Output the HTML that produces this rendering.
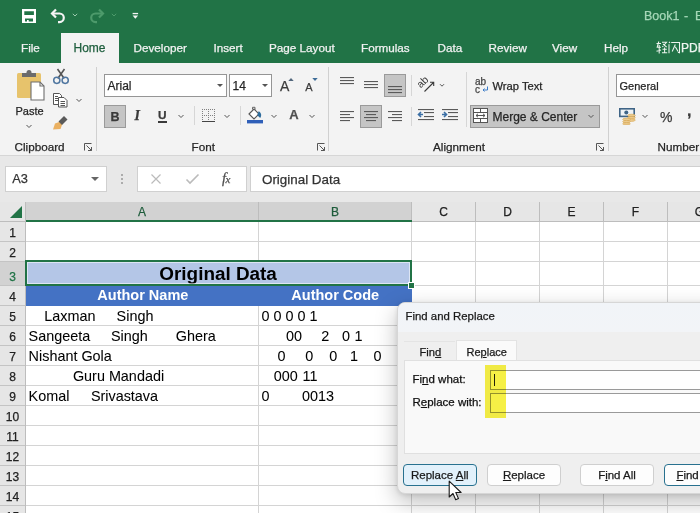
<!DOCTYPE html><html><head><meta charset="utf-8"><style>
html,body{margin:0;padding:0;width:700px;height:513px;overflow:hidden;background:#fff;font-family:"Liberation Sans",sans-serif}
body>div,body>svg{position:absolute}
.t{white-space:pre;line-height:1;-webkit-text-stroke:0.25px currentColor}
</style></head><body>
<div style="left:0px;top:0px;width:700px;height:63px;background:#217346"></div>
<svg style="position:absolute;left:21px;top:8px;" width="16" height="16" viewBox="0 0 16 16"><path fill="#fff" fill-rule="evenodd" d="M1 1h14v14H1z M3.3 3.3h9.6v3.8H3.3z M4 10.6h8v3H7.7v-1.6H6v1.6H4z"/></svg>
<svg style="position:absolute;left:49px;top:7px;" width="18" height="17" viewBox="0 0 18 17"><path d="M3.5 6.5h7a4.3 4.3 0 0 1 0 8.6h-1.5" fill="none" stroke="#f4f4f4" stroke-width="2.2"/><path d="M7 2.5 3 6.5 7 10.5" fill="none" stroke="#f4f4f4" stroke-width="2.2"/></svg>
<svg style="position:absolute;left:71px;top:12px;" width="8" height="6" viewBox="0 0 8 6"><path d="M1.8 1.8 4 4 6.2 1.8" fill="none" stroke="#9cc9ad" stroke-width="1"/></svg>
<svg style="position:absolute;left:88px;top:7px;" width="18" height="17" viewBox="0 0 18 17"><path d="M14.5 6.5h-7a4.3 4.3 0 0 0 0 8.6h1.5" fill="none" stroke="#4d9a6b" stroke-width="2.2"/><path d="M11 2.5 15 6.5 11 10.5" fill="none" stroke="#4d9a6b" stroke-width="2.2"/></svg>
<svg style="position:absolute;left:110px;top:12px;" width="8" height="6" viewBox="0 0 8 6"><path d="M1.8 1.8 4 4 6.2 1.8" fill="none" stroke="#4d9a6b" stroke-width="1"/></svg>
<svg style="position:absolute;left:130px;top:10px;" width="10" height="10" viewBox="0 0 10 10"><rect x="2.6" y="2.9" width="5.5" height="1.3" fill="#f4f4f4"/><path d="M2.6 5.6h5.5L5.35 8.8z" fill="#f4f4f4"/></svg>
<div class="t" style="left:644px;top:10.42px;font-size:12.5px;color:#a6d8b8;font-weight:normal;">Book1</div>
<div class="t" style="left:684px;top:10.42px;font-size:12.5px;color:#a6d8b8;font-weight:normal;">-</div>
<div class="t" style="left:695px;top:10.42px;font-size:12.5px;color:#a6d8b8;font-weight:normal;">E</div>
<div style="left:61px;top:33px;width:58px;height:31px;background:#f3f3f3"></div>
<div class="t" style="left:21px;top:42.10px;font-size:11.7px;color:#f2f2f2;font-weight:normal;">File</div>
<div class="t" style="left:73.5px;top:41.84px;font-size:12px;color:#1f5f3e;font-weight:normal;">Home</div>
<div class="t" style="left:133.5px;top:42.10px;font-size:11.7px;color:#f2f2f2;font-weight:normal;">Developer</div>
<div class="t" style="left:213.5px;top:42.10px;font-size:11.7px;color:#f2f2f2;font-weight:normal;">Insert</div>
<div class="t" style="left:269px;top:42.10px;font-size:11.7px;color:#f2f2f2;font-weight:normal;">Page Layout</div>
<div class="t" style="left:361px;top:42.10px;font-size:11.7px;color:#f2f2f2;font-weight:normal;">Formulas</div>
<div class="t" style="left:437.5px;top:42.10px;font-size:11.7px;color:#f2f2f2;font-weight:normal;">Data</div>
<div class="t" style="left:488.5px;top:42.10px;font-size:11.7px;color:#f2f2f2;font-weight:normal;">Review</div>
<div class="t" style="left:552px;top:42.10px;font-size:11.7px;color:#f2f2f2;font-weight:normal;">View</div>
<div class="t" style="left:604px;top:42.10px;font-size:11.7px;color:#f2f2f2;font-weight:normal;">Help</div>
<svg style="position:absolute;left:656px;top:41px;" width="25" height="13" viewBox="0 0 25 13"><g fill="none" stroke="#eef5ef" stroke-width="1.05"><path d="M0.5 2.5h4.5M2.8 0.5 1.2 6.3h3.8M3.2 4v8.5M0.5 10.3l4.5-1.3M6 1.3h4.5L6.3 6M7 3l3.7 3.2M6.5 8.3h4.3M8.6 6.6v5.2M6 11.8h5.2"/><path d="M13 0.8l1 1.2M13 3.2v9M15.2 1.5h8.3v10.3l-1.6-.5M19.3 3.5 16.2 10.5M19.3 5.8l2.8 4.7"/></g></svg>
<div class="t" style="left:681px;top:41.84px;font-size:12px;color:#eef5ef;font-weight:normal;">PDF</div>
<div style="left:0px;top:63px;width:700px;height:93px;background:#f3f3f3"></div>
<div style="left:0px;top:155px;width:700px;height:1px;background:#d6d6d6"></div>
<div style="left:95.5px;top:67px;width:1px;height:84px;background:#d0d0d0"></div>
<div style="left:327.5px;top:67px;width:1px;height:84px;background:#d0d0d0"></div>
<div style="left:607.5px;top:67px;width:1px;height:84px;background:#d0d0d0"></div>
<div style="left:465.5px;top:72px;width:1px;height:55px;background:#d6d6d6"></div>
<svg style="position:absolute;left:14px;top:69px;" width="34" height="34" viewBox="0 0 34 34"><rect x="3" y="4" width="24" height="25" rx="1.5" fill="#e7c36c"/><path d="M8 4h14v4H8z" fill="#6b6b6b"/><circle cx="15" cy="3.5" r="2.5" fill="#6b6b6b"/><path d="M17 13h9l4 4v14H17z" fill="#fff" stroke="#6e6e6e" stroke-width="1.1"/><path d="M26 13v4h4" fill="none" stroke="#6e6e6e" stroke-width="1.1"/></svg>
<div class="t" style="left:15.5px;top:106.19px;font-size:11px;color:#262626;font-weight:normal;">Paste</div>
<svg style="position:absolute;left:25px;top:123px;" width="8" height="6" viewBox="0 0 8 6"><path d="M1.5 2 4 4.5 6.5 2" fill="none" stroke="#555" stroke-width="1"/></svg>
<svg style="position:absolute;left:52px;top:68px;" width="18" height="17" viewBox="0 0 18 17"><path d="M5.8 10.5 12.5 1M12.2 10.5 5.5 1" stroke="#555" stroke-width="1.6"/><g fill="none" stroke="#4f76a0" stroke-width="1.5"><circle cx="4.8" cy="12.3" r="3.1"/><circle cx="13.2" cy="12.3" r="3.1"/></g></svg>
<svg style="position:absolute;left:52px;top:92px;" width="17" height="16" viewBox="0 0 17 16"><g fill="#fff" stroke="#555" stroke-width="1"><path d="M1.5 1.5h6l2 2v9h-8z"/><path d="M6.5 5.5h5.5l3 3v6.5H6.5z"/></g><g stroke="#555" stroke-width="1"><path d="M3 4.5h3M3 6.5h3M3 8.5h3M8.5 9.5h4.5M8.5 11.5h4.5M8.5 13.5h4.5"/></g></svg>
<svg style="position:absolute;left:75px;top:97px;" width="8" height="6" viewBox="0 0 8 6"><path d="M1.5 2 4 4.5 6.5 2" fill="none" stroke="#555" stroke-width="1"/></svg>
<svg style="position:absolute;left:52px;top:114px;" width="18" height="17" viewBox="0 0 18 17"><path d="M1 15.5 3 9.5 8.5 7.5 10.5 9.5 8.5 15z" fill="#eab061"/><path d="M6.5 7.5 12 2l3.5 3.5L10 11z" fill="#5a5a5a"/></svg>
<div class="t" style="left:14.5px;top:141.10px;font-size:11.7px;color:#262626;font-weight:normal;">Clipboard</div>
<svg style="position:absolute;left:83px;top:142px;" width="10" height="10" viewBox="0 0 10 10"><path d="M1 1h8v8" fill="none" stroke="#666" stroke-width="0"/><path d="M1.5 8.5v-7h7M3.5 3.5l5 5M8.5 5v3.5H5" fill="none" stroke="#555" stroke-width="1"/></svg>
<div style="left:104px;top:74px;width:123px;height:23px;background:#fff;border:1px solid #959595;box-sizing:border-box"></div>
<div class="t" style="left:107.5px;top:79.84px;font-size:12px;color:#262626;font-weight:normal;">Arial</div>
<svg style="position:absolute;left:216px;top:83px;" width="8" height="5" viewBox="0 0 8 5"><path d="M1 1h6L4 4z" fill="#555"/></svg>
<div style="left:229px;top:74px;width:43px;height:23px;background:#fff;border:1px solid #959595;box-sizing:border-box"></div>
<div class="t" style="left:232.5px;top:79.84px;font-size:12px;color:#262626;font-weight:normal;">14</div>
<svg style="position:absolute;left:261px;top:83px;" width="8" height="5" viewBox="0 0 8 5"><path d="M1 1h6L4 4z" fill="#555"/></svg>
<div class="t" style="left:280px;top:79.15px;font-size:14px;color:#3c3c3c;font-weight:normal;">A</div>
<svg style="position:absolute;left:287.5px;top:77px;" width="6" height="5" viewBox="0 0 6 5"><path d="M0.3 4 3 1 5.7 4z" fill="#52677c"/></svg>
<div class="t" style="left:305.3px;top:81.69px;font-size:11px;color:#3c3c3c;font-weight:normal;">A</div>
<svg style="position:absolute;left:311.5px;top:77px;" width="6" height="5" viewBox="0 0 6 5"><path d="M0.3 1 3 4 5.7 1z" fill="#3d6c98"/></svg>
<div style="left:104px;top:105px;width:22px;height:23px;background:#c5c5c5;border:1px solid #9a9a9a;box-sizing:border-box"></div>
<div class="t" style="left:110.5px;top:110.92px;font-size:12.5px;color:#3a3a3a;font-weight:bold;">B</div>
<div class="t" style="left:134.5px;top:108.95px;font-size:14px;color:#3a3a3a;font-weight:bold;font-family:'Liberation Serif',serif"><i>I</i></div>
<div class="t" style="left:158px;top:109.61px;font-size:11.8px;color:#3a3a3a;font-weight:bold;">U</div>
<div style="left:158px;top:121.4px;width:9px;height:1.2px;background:#3a3a3a"></div>
<svg style="position:absolute;left:177px;top:113px;" width="8" height="6" viewBox="0 0 8 6"><path d="M1.5 2 4 4.5 6.5 2" fill="none" stroke="#555" stroke-width="1"/></svg>
<div style="left:193.5px;top:106px;width:1px;height:19px;background:#d6d6d6"></div>
<svg style="position:absolute;left:201px;top:108px;" width="15" height="15" viewBox="0 0 15 15"><g stroke="#808080" stroke-width="1" stroke-dasharray="1 1" fill="none"><path d="M1.5 1v11M7.5 1v11M13.5 1v11M1 1.5h13M1 7.5h13"/></g><path d="M1 13.5h13" stroke="#444" stroke-width="1"/></svg>
<svg style="position:absolute;left:223px;top:113px;" width="8" height="6" viewBox="0 0 8 6"><path d="M1.5 2 4 4.5 6.5 2" fill="none" stroke="#555" stroke-width="1"/></svg>
<div style="left:239.5px;top:106px;width:1px;height:19px;background:#d6d6d6"></div>
<svg style="position:absolute;left:245px;top:106px;" width="19" height="18" viewBox="0 0 19 18"><path d="M4 8 9 3 14 8 9 13z" fill="#fff" stroke="#555" stroke-width="1.1"/><path d="M7.5 3.5V1.3h2.5v2.5" fill="none" stroke="#666" stroke-width="1"/><path d="M13.6 5.3c2.6 1.4 3.4 4.2 1.6 6.6L12.3 9.2z" fill="#2e6c9c"/><rect x="2" y="14" width="16" height="3.4" fill="#2f5fb8"/></svg>
<svg style="position:absolute;left:270px;top:113px;" width="8" height="6" viewBox="0 0 8 6"><path d="M1.5 2 4 4.5 6.5 2" fill="none" stroke="#555" stroke-width="1"/></svg>
<div class="t" style="left:289.3px;top:108.40px;font-size:13px;color:#505050;font-weight:bold;">A</div>
<svg style="position:absolute;left:308px;top:113px;" width="8" height="6" viewBox="0 0 8 6"><path d="M1.5 2 4 4.5 6.5 2" fill="none" stroke="#555" stroke-width="1"/></svg>
<div class="t" style="left:191.5px;top:141.10px;font-size:11.7px;color:#262626;font-weight:normal;">Font</div>
<svg style="position:absolute;left:316px;top:142px;" width="10" height="10" viewBox="0 0 10 10"><path d="M1.5 8.5v-7h7M3.5 3.5l5 5M8.5 5v3.5H5" fill="none" stroke="#555" stroke-width="1"/></svg>
<svg style="position:absolute;left:0px;top:0px;pointer-events:none" width="700" height="155" viewBox="0 0 700 155"><g fill="#5a5a5a"><rect x="340" y="77" width="14" height="1.1"/><rect x="340" y="80" width="14" height="1.1"/><rect x="340" y="83" width="14" height="1.1"/><rect x="364" y="81" width="14" height="1.1"/><rect x="364" y="84" width="14" height="1.1"/><rect x="364" y="87" width="14" height="1.1"/></g></svg>
<div style="left:384px;top:74px;width:22px;height:23px;background:#c5c5c5;border:1px solid #9a9a9a;box-sizing:border-box"></div>
<div style="left:360px;top:105px;width:22px;height:23px;background:#c5c5c5;border:1px solid #9a9a9a;box-sizing:border-box"></div>
<svg style="position:absolute;left:0px;top:0px;pointer-events:none" width="700" height="155" viewBox="0 0 700 155"><g fill="#5a5a5a"><rect x="388" y="86" width="14" height="1.1"/><rect x="388" y="89" width="14" height="1.1"/><rect x="388" y="92" width="14" height="1.1"/><rect x="340" y="111" width="14" height="1.1"/><rect x="340" y="114" width="10" height="1.1"/><rect x="340" y="117" width="14" height="1.1"/><rect x="340" y="120" width="10" height="1.1"/><rect x="364" y="111" width="14" height="1.1"/><rect x="366" y="114" width="10" height="1.1"/><rect x="364" y="117" width="14" height="1.1"/><rect x="366" y="120" width="10" height="1.1"/><rect x="388" y="111" width="14" height="1.1"/><rect x="392" y="114" width="10" height="1.1"/><rect x="388" y="117" width="14" height="1.1"/><rect x="392" y="120" width="10" height="1.1"/><rect x="418" y="109" width="16" height="1.1"/><rect x="424" y="112" width="10" height="1.1"/><rect x="424" y="116" width="10" height="1.1"/><rect x="418" y="119" width="16" height="1.1"/><rect x="442" y="109" width="16" height="1.1"/><rect x="448" y="112" width="10" height="1.1"/><rect x="448" y="116" width="10" height="1.1"/><rect x="442" y="119" width="16" height="1.1"/></g><path d="M418.5 114.5h4.5M421 112l-2.5 2.5 2.5 2.5" fill="none" stroke="#3b6fa5" stroke-width="1.6"/><path d="M442 114.5h4.5M444 112l2.5 2.5-2.5 2.5" fill="none" stroke="#3b6fa5" stroke-width="1.6"/><text x="0" y="0" font-family="Liberation Sans" font-size="10.5" fill="#3a3a3a" transform="translate(420.8 88.6) rotate(-45)">ab</text><path d="M424.5 91.5 433.5 82.5M430 82.3h3.7v3.7" fill="none" stroke="#3a3a3a" stroke-width="1.1"/><path d="M440 84.2 442 86.2 444 84.2" fill="none" stroke="#555" stroke-width="1"/></svg>
<div style="left:410.5px;top:75px;width:1px;height:21px;background:#d6d6d6"></div>
<div style="left:410.5px;top:107px;width:1px;height:19px;background:#d6d6d6"></div>
<div class="t" style="left:475px;top:76.53px;font-size:10px;color:#444;font-weight:normal;">ab</div>
<div class="t" style="left:475px;top:84.53px;font-size:10px;color:#444;font-weight:normal;">c</div>
<svg style="position:absolute;left:482px;top:86px;" width="7" height="7" viewBox="0 0 7 7"><path d="M5.5 0.5v3.5H1M2.5 2.5 1 4l1.5 1.5" fill="none" stroke="#3a7bc8" stroke-width="1"/></svg>
<div class="t" style="left:492.5px;top:80.52px;font-size:11.2px;color:#262626;font-weight:normal;">Wrap Text</div>
<div style="left:470px;top:105px;width:130px;height:23px;background:#c5c5c5;border:1px solid #9a9a9a;box-sizing:border-box"></div>
<svg style="position:absolute;left:473px;top:108px;" width="15" height="15" viewBox="0 0 15 15"><rect x="0.5" y="0.5" width="14" height="14" fill="#fff" stroke="#555"/><path d="M0.5 4.5h14M0.5 10.5h14M7.5 0.5v4M7.5 10.5v4M3 7.5h9M5 5.8 3 7.5 5 9.2M10 5.8 12 7.5 10 9.2" fill="none" stroke="#555" stroke-width="1"/></svg>
<div class="t" style="left:492.5px;top:111.14px;font-size:12px;color:#262626;font-weight:normal;">Merge &amp; Center</div>
<svg style="position:absolute;left:587px;top:113px;" width="8" height="6" viewBox="0 0 8 6"><path d="M1.5 2 4 4.5 6.5 2" fill="none" stroke="#555" stroke-width="1"/></svg>
<div class="t" style="left:433px;top:141.10px;font-size:11.7px;color:#262626;font-weight:normal;">Alignment</div>
<svg style="position:absolute;left:595px;top:142px;" width="10" height="10" viewBox="0 0 10 10"><path d="M1.5 8.5v-7h7M3.5 3.5l5 5M8.5 5v3.5H5" fill="none" stroke="#555" stroke-width="1"/></svg>
<div style="left:616px;top:74px;width:100px;height:23px;background:#fff;border:1px solid #959595;box-sizing:border-box"></div>
<div class="t" style="left:619.5px;top:80.69px;font-size:11px;color:#262626;font-weight:normal;">General</div>
<svg style="position:absolute;left:618px;top:107px;" width="19" height="18" viewBox="0 0 19 18"><rect x="1.8" y="1.8" width="14.4" height="7.6" fill="#eef2f5" stroke="#3f6486" stroke-width="1.6"/><circle cx="8.3" cy="5.6" r="2" fill="#3f6486"/><g fill="#ebca8e" stroke="#d6a651" stroke-width="0.6"><ellipse cx="13.5" cy="8.5" rx="3.8" ry="1.3"/><ellipse cx="13.5" cy="10.8" rx="3.8" ry="1.3"/><ellipse cx="13.5" cy="13.1" rx="3.8" ry="1.3"/><ellipse cx="8.5" cy="12.4" rx="3.8" ry="1.3"/><ellipse cx="8.5" cy="14.7" rx="3.8" ry="1.3"/><ellipse cx="8.5" cy="16.8" rx="3.8" ry="1.1"/></g></svg>
<svg style="position:absolute;left:641px;top:113px;" width="8" height="6" viewBox="0 0 8 6"><path d="M1.5 2 4 4.5 6.5 2" fill="none" stroke="#555" stroke-width="1"/></svg>
<div class="t" style="left:660px;top:109.65px;font-size:14px;color:#3a3a3a;font-weight:normal;">%</div>
<div class="t" style="left:687px;top:103.46px;font-size:16px;color:#3a3a3a;font-weight:bold;">,</div>
<div class="t" style="left:657.5px;top:141.10px;font-size:11.7px;color:#262626;font-weight:normal;">Number</div>
<div style="left:0px;top:156px;width:700px;height:46px;background:#e8e8e8"></div>
<div style="left:5px;top:166px;width:102px;height:26px;background:#fff;border:1px solid #d0d0d0;box-sizing:border-box"></div>
<div class="t" style="left:12.3px;top:172.66px;font-size:12.8px;color:#333;font-weight:normal;">A3</div>
<svg style="position:absolute;left:90px;top:176px;" width="10" height="6" viewBox="0 0 10 6"><path d="M1 1h8L5 5z" fill="#666"/></svg>
<svg style="position:absolute;left:120px;top:173px;" width="4" height="12" viewBox="0 0 4 12"><circle cx="2" cy="2" r="1" fill="#999"/><circle cx="2" cy="6" r="1" fill="#999"/><circle cx="2" cy="10" r="1" fill="#999"/></svg>
<div style="left:137px;top:166px;width:110px;height:26px;background:#fff;border:1px solid #d0d0d0;box-sizing:border-box"></div>
<svg style="position:absolute;left:150px;top:173px;" width="12" height="12" viewBox="0 0 12 12"><path d="M1.5 1.5l9 9M10.5 1.5l-9 9" stroke="#bbb" stroke-width="1.2"/></svg>
<svg style="position:absolute;left:185px;top:173px;" width="15" height="12" viewBox="0 0 15 12"><path d="M1.5 6.5 5 10l8.5-8.5" fill="none" stroke="#bbb" stroke-width="1.6"/></svg>
<div class="t" style="left:222px;top:170.73px;font-size:14.5px;color:#505050;font-weight:normal;font-family:'Liberation Serif',serif"><i>f</i><span style="font-size:11px;margin-left:-0.5px"><i>x</i></span></div>
<div style="left:250px;top:166px;width:460px;height:26px;background:#fff;border:1px solid #d0d0d0;box-sizing:border-box"></div>
<div class="t" style="left:262px;top:172.66px;font-size:13.4px;color:#333;font-weight:normal;">Original Data</div>
<div style="left:0px;top:202px;width:700px;height:19px;background:#e6e6e6"></div>
<div style="left:26px;top:202px;width:385px;height:18px;background:#d2d2d2"></div>
<svg style="position:absolute;left:9px;top:205px;" width="14" height="14" viewBox="0 0 14 14"><path d="M13 1v12H1z" fill="#217346"/></svg>
<div style="left:0px;top:221px;width:25px;height:300px;background:#e6e6e6"></div>
<div style="left:0px;top:261px;width:25px;height:24px;background:#d2d2d2"></div>
<div style="left:26px;top:222px;width:700px;height:300px;background:#fff"></div>
<svg style="position:absolute;left:0px;top:0px;pointer-events:none" width="700" height="513" viewBox="0 0 700 513"><rect x="26" y="241" width="674" height="1" fill="#d4d4d4"/><rect x="0" y="241" width="25" height="1" fill="#c4c4c4"/><rect x="26" y="261" width="674" height="1" fill="#d4d4d4"/><rect x="0" y="261" width="25" height="1" fill="#c4c4c4"/><rect x="26" y="285" width="674" height="1" fill="#d4d4d4"/><rect x="0" y="285" width="25" height="1" fill="#c4c4c4"/><rect x="26" y="305" width="674" height="1" fill="#d4d4d4"/><rect x="0" y="305" width="25" height="1" fill="#c4c4c4"/><rect x="26" y="325" width="674" height="1" fill="#d4d4d4"/><rect x="0" y="325" width="25" height="1" fill="#c4c4c4"/><rect x="26" y="345" width="674" height="1" fill="#d4d4d4"/><rect x="0" y="345" width="25" height="1" fill="#c4c4c4"/><rect x="26" y="365" width="674" height="1" fill="#d4d4d4"/><rect x="0" y="365" width="25" height="1" fill="#c4c4c4"/><rect x="26" y="385" width="674" height="1" fill="#d4d4d4"/><rect x="0" y="385" width="25" height="1" fill="#c4c4c4"/><rect x="26" y="405" width="674" height="1" fill="#d4d4d4"/><rect x="0" y="405" width="25" height="1" fill="#c4c4c4"/><rect x="26" y="425" width="674" height="1" fill="#d4d4d4"/><rect x="0" y="425" width="25" height="1" fill="#c4c4c4"/><rect x="26" y="445" width="674" height="1" fill="#d4d4d4"/><rect x="0" y="445" width="25" height="1" fill="#c4c4c4"/><rect x="26" y="465" width="674" height="1" fill="#d4d4d4"/><rect x="0" y="465" width="25" height="1" fill="#c4c4c4"/><rect x="26" y="485" width="674" height="1" fill="#d4d4d4"/><rect x="0" y="485" width="25" height="1" fill="#c4c4c4"/><rect x="26" y="505" width="674" height="1" fill="#d4d4d4"/><rect x="0" y="505" width="25" height="1" fill="#c4c4c4"/><rect x="26" y="525" width="674" height="1" fill="#d4d4d4"/><rect x="0" y="525" width="25" height="1" fill="#c4c4c4"/><rect x="258" y="222" width="1" height="300" fill="#d4d4d4"/><rect x="258" y="202" width="1" height="19" fill="#bdbdbd"/><rect x="411" y="222" width="1" height="300" fill="#d4d4d4"/><rect x="411" y="202" width="1" height="19" fill="#bdbdbd"/><rect x="475" y="222" width="1" height="300" fill="#d4d4d4"/><rect x="475" y="202" width="1" height="19" fill="#bdbdbd"/><rect x="539" y="222" width="1" height="300" fill="#d4d4d4"/><rect x="539" y="202" width="1" height="19" fill="#bdbdbd"/><rect x="603" y="222" width="1" height="300" fill="#d4d4d4"/><rect x="603" y="202" width="1" height="19" fill="#bdbdbd"/><rect x="667" y="222" width="1" height="300" fill="#d4d4d4"/><rect x="667" y="202" width="1" height="19" fill="#bdbdbd"/><rect x="731" y="222" width="1" height="300" fill="#d4d4d4"/><rect x="731" y="202" width="1" height="19" fill="#bdbdbd"/><rect x="25" y="202" width="1" height="320" fill="#bdbdbd"/><rect x="0" y="221" width="700" height="1" fill="#bdbdbd"/><rect x="26" y="220" width="386" height="2" fill="#217346"/></svg>
<div style="left:26px;top:261px;width:385px;height:24px;background:#b4c6e7"></div>
<div style="left:26px;top:285px;width:386px;height:21px;background:#4472c4"></div>
<div class="t" style="left:122.0px;width:40px;text-align:center;top:205.84px;font-size:12px;color:#1e5c3b">A</div>
<div class="t" style="left:315.0px;width:40px;text-align:center;top:205.84px;font-size:12px;color:#1e5c3b">B</div>
<div class="t" style="left:423.5px;width:40px;text-align:center;top:205.84px;font-size:12px;color:#222">C</div>
<div class="t" style="left:487.5px;width:40px;text-align:center;top:205.84px;font-size:12px;color:#222">D</div>
<div class="t" style="left:551.5px;width:40px;text-align:center;top:205.84px;font-size:12px;color:#222">E</div>
<div class="t" style="left:615.5px;width:40px;text-align:center;top:205.84px;font-size:12px;color:#222">F</div>
<div class="t" style="left:679.5px;width:40px;text-align:center;top:205.84px;font-size:12px;color:#222">G</div>
<div class="t" style="left:0;width:25px;text-align:center;top:226.84px;font-size:12px;color:#222">1</div>
<div class="t" style="left:0;width:25px;text-align:center;top:246.84px;font-size:12px;color:#222">2</div>
<div class="t" style="left:0;width:25px;text-align:center;top:270.84px;font-size:12px;color:#217346">3</div>
<div class="t" style="left:0;width:25px;text-align:center;top:290.84px;font-size:12px;color:#222">4</div>
<div class="t" style="left:0;width:25px;text-align:center;top:310.84px;font-size:12px;color:#222">5</div>
<div class="t" style="left:0;width:25px;text-align:center;top:330.84px;font-size:12px;color:#222">6</div>
<div class="t" style="left:0;width:25px;text-align:center;top:350.84px;font-size:12px;color:#222">7</div>
<div class="t" style="left:0;width:25px;text-align:center;top:370.84px;font-size:12px;color:#222">8</div>
<div class="t" style="left:0;width:25px;text-align:center;top:390.84px;font-size:12px;color:#222">9</div>
<div class="t" style="left:0;width:25px;text-align:center;top:410.84px;font-size:12px;color:#222">10</div>
<div class="t" style="left:0;width:25px;text-align:center;top:430.84px;font-size:12px;color:#222">11</div>
<div class="t" style="left:0;width:25px;text-align:center;top:450.84px;font-size:12px;color:#222">12</div>
<div class="t" style="left:0;width:25px;text-align:center;top:470.84px;font-size:12px;color:#222">13</div>
<div class="t" style="left:0;width:25px;text-align:center;top:490.84px;font-size:12px;color:#222">14</div>
<div class="t" style="left:0;width:25px;text-align:center;top:510.84px;font-size:12px;color:#222">15</div>
<div class="t" style="left:159.3px;top:265.00px;font-size:18.9px;color:#000;font-weight:bold;-webkit-text-stroke:0">Original Data</div>
<div class="t" style="left:97.3px;top:288.03px;font-size:14.5px;color:#fff;font-weight:bold;-webkit-text-stroke:0">Author Name</div>
<div class="t" style="left:291.3px;top:288.03px;font-size:14.5px;color:#fff;font-weight:bold;-webkit-text-stroke:0">Author Code</div>
<div style="left:25px;top:260px;width:387px;height:26px;border:2px solid #217346;box-sizing:border-box"></div>
<div style="left:27px;top:262px;width:383px;height:22px;border:1px solid rgba(255,255,255,0.55);box-sizing:border-box"></div>
<div style="left:408px;top:282px;width:5px;height:5px;background:#217346;border:1px solid #fff"></div>
<div class="t" style="left:44.3px;top:309.31px;font-size:14.4px;color:#000;font-weight:normal;-webkit-text-stroke:0.05px #000">Laxman</div>
<div class="t" style="left:116.6px;top:309.31px;font-size:14.4px;color:#000;font-weight:normal;-webkit-text-stroke:0.05px #000">Singh</div>
<div class="t" style="left:261.4px;top:309.31px;font-size:14.4px;color:#000;font-weight:normal;-webkit-text-stroke:0.05px #000">0 0 0 0 1</div>
<div class="t" style="left:28.6px;top:329.31px;font-size:14.4px;color:#000;font-weight:normal;-webkit-text-stroke:0.05px #000">Sangeeta</div>
<div class="t" style="left:110.9px;top:329.31px;font-size:14.4px;color:#000;font-weight:normal;-webkit-text-stroke:0.05px #000">Singh</div>
<div class="t" style="left:175.7px;top:329.31px;font-size:14.4px;color:#000;font-weight:normal;-webkit-text-stroke:0.05px #000">Ghera</div>
<div class="t" style="left:285.9px;top:329.31px;font-size:14.4px;color:#000;font-weight:normal;-webkit-text-stroke:0.05px #000">00</div>
<div class="t" style="left:321.3px;top:329.31px;font-size:14.4px;color:#000;font-weight:normal;-webkit-text-stroke:0.05px #000">2</div>
<div class="t" style="left:341.9px;top:329.31px;font-size:14.4px;color:#000;font-weight:normal;-webkit-text-stroke:0.05px #000">0</div>
<div class="t" style="left:354.4px;top:329.31px;font-size:14.4px;color:#000;font-weight:normal;-webkit-text-stroke:0.05px #000">1</div>
<div class="t" style="left:28.6px;top:348.81px;font-size:14.4px;color:#000;font-weight:normal;-webkit-text-stroke:0.05px #000">Nishant Gola</div>
<div class="t" style="left:277.4px;top:348.81px;font-size:14.4px;color:#000;font-weight:normal;-webkit-text-stroke:0.05px #000">0</div>
<div class="t" style="left:305.3px;top:348.81px;font-size:14.4px;color:#000;font-weight:normal;-webkit-text-stroke:0.05px #000">0</div>
<div class="t" style="left:329.3px;top:348.81px;font-size:14.4px;color:#000;font-weight:normal;-webkit-text-stroke:0.05px #000">0</div>
<div class="t" style="left:349.9px;top:348.81px;font-size:14.4px;color:#000;font-weight:normal;-webkit-text-stroke:0.05px #000">1</div>
<div class="t" style="left:373.4px;top:348.81px;font-size:14.4px;color:#000;font-weight:normal;-webkit-text-stroke:0.05px #000">0</div>
<div class="t" style="left:72.9px;top:368.81px;font-size:14.4px;color:#000;font-weight:normal;-webkit-text-stroke:0.05px #000">Guru Mandadi</div>
<div class="t" style="left:273.7px;top:368.81px;font-size:14.4px;color:#000;font-weight:normal;-webkit-text-stroke:0.05px #000">000</div>
<div class="t" style="left:302.5px;top:368.81px;font-size:14.4px;color:#000;font-weight:normal;-webkit-text-stroke:0.05px #000">11</div>
<div class="t" style="left:28.6px;top:388.81px;font-size:14.4px;color:#000;font-weight:normal;-webkit-text-stroke:0.05px #000">Komal</div>
<div class="t" style="left:90.9px;top:388.81px;font-size:14.4px;color:#000;font-weight:normal;-webkit-text-stroke:0.05px #000">Srivastava</div>
<div class="t" style="left:261.4px;top:388.81px;font-size:14.4px;color:#000;font-weight:normal;-webkit-text-stroke:0.05px #000">0</div>
<div class="t" style="left:301.9px;top:388.81px;font-size:14.4px;color:#000;font-weight:normal;-webkit-text-stroke:0.05px #000">0013</div>
<div style="left:396.5px;top:302px;width:330px;height:191.8px;background:#efefef;border:1px solid #d6d6d6;border-radius:8px;box-shadow:0 8px 22px rgba(0,0,0,0.26), 0 1px 4px rgba(0,0,0,0.10);box-sizing:border-box"></div>
<div style="left:398px;top:303px;width:310px;height:29px;background:linear-gradient(#f1f4f8,#f2f4f7);border-radius:7px 0 0 0"></div>
<div class="t" style="left:405.5px;top:311.35px;font-size:11.4px;color:#1a1a1a;font-weight:normal;">Find and Replace</div>
<div style="left:404px;top:341px;width:51px;height:20px;background:#efefef;border-top:1px solid #e4e4e4;box-sizing:border-box"></div>
<div style="left:455.5px;top:339.5px;width:61px;height:22px;background:#fafafa;border:1px solid #e3e3e3;border-bottom:none;box-sizing:border-box"></div>
<div class="t" style="left:419.5px;top:346.52px;font-size:11.2px;color:#1a1a1a;font-weight:normal;">Fin<u>d</u></div>
<div class="t" style="left:466.5px;top:346.69px;font-size:11px;color:#1a1a1a;font-weight:normal;">Re<u>p</u>lace</div>
<div style="left:404px;top:360px;width:310px;height:94px;background:#f9f9f9;border:1px solid #e0e0e0;box-sizing:border-box"></div>
<div class="t" style="left:412.5px;top:374.07px;font-size:11.5px;color:#111;font-weight:normal;">Fi<u>n</u>d what:</div>
<div class="t" style="left:412.5px;top:397.27px;font-size:11.5px;color:#111;font-weight:normal;">R<u>e</u>place with:</div>
<div style="left:490px;top:370px;width:230px;height:20px;background:#fff;border:1px solid #9a9a9a;box-sizing:border-box"></div>
<div style="left:490px;top:393px;width:230px;height:20px;background:#fff;border:1px solid #9a9a9a;box-sizing:border-box"></div>
<div style="left:494px;top:373.5px;width:1.4px;height:12.5px;background:#222"></div>
<div style="left:485px;top:365px;width:21px;height:53px;background:#f6f046;mix-blend-mode:multiply"></div>
<div style="left:402.5px;top:464px;width:74.5px;height:22px;border-radius:4px;box-sizing:border-box;background:#e2f1fb;border:1px solid #28718f"></div>
<div class="t" style="left:402.5px;width:74.5px;text-align:center;top:470.27px;font-size:11.5px;color:#1a1a1a">Replace <u>A</u>ll</div>
<div style="left:487px;top:464px;width:74px;height:22px;border-radius:4px;box-sizing:border-box;background:#fdfdfd;border:1px solid #cfcfcf"></div>
<div class="t" style="left:487px;width:74px;text-align:center;top:470.27px;font-size:11.5px;color:#1a1a1a"><u>R</u>eplace</div>
<div style="left:580px;top:464px;width:74px;height:22px;border-radius:4px;box-sizing:border-box;background:#fdfdfd;border:1px solid #cfcfcf"></div>
<div class="t" style="left:580px;width:74px;text-align:center;top:470.27px;font-size:11.5px;color:#1a1a1a">F<u>i</u>nd All</div>
<div style="left:664px;top:464px;width:74px;height:22px;border-radius:4px;box-sizing:border-box;background:#fdfdfd;border:1px solid #28718f"></div>
<div class="t" style="left:664px;width:74px;text-align:center;top:470.27px;font-size:11.5px;color:#1a1a1a"><u>F</u>ind Next</div>
<svg style="position:absolute;left:448px;top:480px;" width="15" height="22" viewBox="0 0 15 22"><path d="M1.2 1.2v15.8l3.8-3.5 2.7 6.3 2.8-1.2-2.7-6.1h5.3z" fill="#fff" stroke="#1a1a1a" stroke-width="1.1" stroke-linejoin="round"/></svg>
</body></html>
